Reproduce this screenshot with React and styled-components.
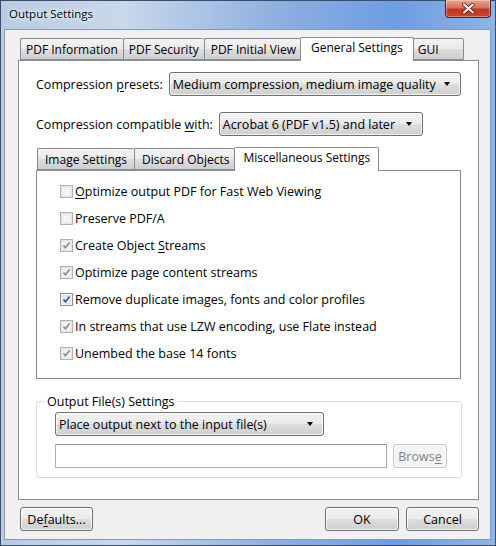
import React from "react";
import styled, { createGlobalStyle } from "styled-components";

const Global = createGlobalStyle`
  html, body { margin: 0; padding: 0; }
  body {
    font-family: "Open Sans", "Noto Sans", sans-serif;
    font-size: 12.5px;
    color: #000;
    background: #6f93c4;
  }
`;

const Window = styled.div`
  width: 496px;
  height: 546px;
  box-sizing: border-box;
  display: flex;
  flex-direction: column;
  background: linear-gradient(90deg, #b9cbe2 0%, #c9d8ea 25%, #8fb0e0 55%, #6d9de2 80%, #8fb4e6 100%);
  padding: 0 5px 6px 4px;
  box-shadow: inset 0 0 0 1px #3a4d6a;
`;

const TitleBar = styled.div`
  height: 29px;
  display: flex;
  align-items: flex-start;
  justify-content: space-between;
`;

const Title = styled.div`
  padding: 6px 0 0 5px;
  font-size: 11.5px;
  color: #000;
  text-shadow: 0 0 6px #fff, 0 0 4px #fff;
`;

const CloseButton = styled.div`
  width: 44px;
  height: 17px;
  border: 1px solid #5a1e1e;
  border-top: none;
  border-radius: 0 0 4px 4px;
  background: linear-gradient(180deg, #e8a493 0%, #d7715c 45%, #c1351e 55%, #c9452c 100%);
  display: flex;
  align-items: center;
  justify-content: center;
  box-shadow: inset 0 0 0 1px rgba(255, 255, 255, 0.35);
`;

const Client = styled.div`
  flex: 1;
  background: #f0f0f0;
  border: 1px solid #8a9bb3;
  display: flex;
  flex-direction: column;
  padding: 6px 11px 0 13px;
`;

const TabRow = styled.div`
  display: flex;
  align-items: flex-end;
  height: 24px;
  padding-left: ${(p) => p.$indent ?? 2}px;
  position: relative;
  z-index: 1;
  font-size: 12px;
`;

const Tab = styled.div`
  box-sizing: border-box;
  height: ${(p) => (p.$active ? 24 : 22)}px;
  padding: ${(p) => (p.$active ? `1px ${p.$pad ?? 10}px 0` : `2px ${p.$pad ?? 5}px 0`)};
  margin: ${(p) => (p.$active ? "0 -2px -1px" : "0")};
  border: 1px solid #898c95;
  border-right: ${(p) => (p.$active || p.$last ? "1px solid #898c95" : "none")};
  border-bottom: ${(p) => (p.$active ? "none" : "1px solid #898c95")};
  border-radius: 2px 2px 0 0;
  background: ${(p) =>
    p.$active ? "#fff" : "linear-gradient(180deg, #f2f2f2 0%, #ebebeb 50%, #dddddd 51%, #cfcfcf 100%)"};
  position: relative;
  z-index: ${(p) => (p.$active ? 2 : 1)};
  white-space: nowrap;
  line-height: 18px;
  ${(p) => (p.$width ? `width: ${p.$width}px;` : "")}
`;

const Panel = styled.div`
  background: #fff;
  border: 1px solid #898c95;
  box-sizing: border-box;
  height: ${(p) => p.$h}px;
  flex-shrink: 0;
  display: flex;
  flex-direction: column;
  padding: ${(p) => p.$pad};
`;

const FieldRow = styled.div`
  display: flex;
  align-items: center;
  gap: ${(p) => p.$gap}px;
  margin-bottom: ${(p) => p.$mb || 0}px;
  white-space: nowrap;
`;

const U = styled.span`
  text-decoration: underline;
  text-underline-offset: 2px;
`;

const Combo = styled.div`
  box-sizing: border-box;
  width: ${(p) => p.$w}px;
  height: 24px;
  flex-shrink: 0;
  border: 1px solid #707070;
  border-radius: 3px;
  background: linear-gradient(180deg, #f2f2f2 0%, #ebebeb 50%, #dddddd 51%, #cfcfcf 100%);
  display: flex;
  align-items: center;
  justify-content: space-between;
  padding: 0 10px 0 3px;
  white-space: nowrap;
  box-shadow: inset 0 0 0 1px rgba(255, 255, 255, 0.7);
`;

const Arrow = styled.span`
  width: 0;
  height: 0;
  border-left: 3.5px solid transparent;
  border-right: 3.5px solid transparent;
  border-top: 4px solid #000;
`;

const InnerWrap = styled.div`
  display: flex;
  flex-direction: column;
  margin-top: 10px;
`;

const CheckList = styled.div`
  display: flex;
  flex-direction: column;
  gap: 14px;
`;

const CheckRow = styled.div`
  display: flex;
  align-items: center;
  gap: 2px;
  height: 13px;
  line-height: 13px;
  white-space: nowrap;
`;

const Box = styled.span`
  box-sizing: border-box;
  width: 13px;
  height: 13px;
  border: 1px solid ${(p) => (p.$enabled ? "#8e8f8f" : "#b1b1b1")};
  background: ${(p) =>
    p.$enabled ? "linear-gradient(135deg, #dcdcdc, #fff)" : "#f4f4f4"};
  box-shadow: inset 0 0 0 1px ${(p) => (p.$enabled ? "#f4f4f4" : "#e6e6e6")},
    inset 0 0 0 2px ${(p) => (p.$enabled ? "#dfe6ee" : "#ececec")};
  display: flex;
  align-items: center;
  justify-content: center;
  flex-shrink: 0;
`;

const Group = styled.fieldset`
  margin: 14px 0 0;
  border: 1px solid #dcdcdc;
  border-radius: 3px;
  padding: 2px 14px 9px 18px;
  display: flex;
  flex-direction: column;
  gap: 8px;
`;

const Legend = styled.legend`
  padding: 0 3px;
  margin-left: -11px;
`;

const TextBox = styled.div`
  box-sizing: border-box;
  width: 332px;
  height: 24px;
  border: 1px solid #abadb3;
  border-top-color: #8f94a0;
  border-radius: 1px;
  background: #fff;
`;

const Button = styled.div`
  box-sizing: border-box;
  width: ${(p) => p.$w}px;
  height: 24px;
  margin-left: ${(p) => p.$ml || 0}px;
  border: 1px solid ${(p) => (p.$disabled ? "#c9c9c9" : "#707070")};
  border-radius: 3px;
  background: ${(p) =>
    p.$disabled ? "#f4f4f4" : "linear-gradient(180deg, #f2f2f2 0%, #ebebeb 50%, #dddddd 51%, #cfcfcf 100%)"};
  color: ${(p) => (p.$disabled ? "#838383" : "#000")};
  display: flex;
  align-items: center;
  justify-content: center;
  box-shadow: inset 0 0 0 1px rgba(255, 255, 255, 0.7);
  white-space: nowrap;
`;

const BottomBar = styled.div`
  display: flex;
  align-items: center;
  margin-top: 7px;
  padding-left: 2px;
`;

const Spacer = styled.div`
  flex: 1;
`;

const Check = ({ on, enabled, children }) => (
  <CheckRow>
    <Box $enabled={enabled}>
      {on && (
        <svg width="9" height="9" viewBox="0 0 9 9">
          <path
            d="M1.5 4.6 L3.5 6.8 L7.5 1.6"
            fill="none"
            stroke={enabled ? "#2a4bb0" : "#8a8a8a"}
            strokeWidth="1.6"
          />
        </svg>
      )}
    </Box>
    <span>{children}</span>
  </CheckRow>
);

export default function App() {
  return (
    <>
      <Global />
      <Window>
        <TitleBar>
          <Title>Output Settings</Title>
          <CloseButton>
            <svg width="13" height="11" viewBox="0 0 13 11">
              <path d="M2 1.5 L11 9.5 M11 1.5 L2 9.5" stroke="#5a1a10" strokeWidth="3.6" strokeLinecap="round" />
              <path d="M2 1.5 L11 9.5 M11 1.5 L2 9.5" stroke="#fff" strokeWidth="2" strokeLinecap="round" />
            </svg>
          </CloseButton>
        </TitleBar>
        <Client>
          <TabRow>
            <Tab>PDF Information</Tab>
            <Tab>PDF Security</Tab>
            <Tab $pad={6}>PDF Initial View</Tab>
            <Tab $active>General Settings</Tab>
            <Tab $last $width={52}>GUI</Tab>
          </TabRow>
          <Panel $h={440} $pad="11px 17px 0 17px">
            <FieldRow $gap={6} $mb={16}>
              <span>
                Compression <U>p</U>resets:
              </span>
              <Combo $w={292}>
                Medium compression, medium image quality <Arrow />
              </Combo>
            </FieldRow>
            <FieldRow $gap={6}>
              <span>
                Compression compatible <U>w</U>ith:
              </span>
              <Combo $w={204}>
                Acrobat 6 (PDF v1.5) and later <Arrow />
              </Combo>
            </FieldRow>
            <InnerWrap>
              <TabRow $indent={1}>
                <Tab $pad={7}>Image Settings</Tab>
                <Tab $pad={7}>Discard Objects</Tab>
                <Tab $pad={8} $active>
                  Miscellaneous Settings
                </Tab>
              </TabRow>
              <Panel $h={209} $pad="14px 23px 0 23px">
                <CheckList>
                  <Check>
                    <U>O</U>ptimize output PDF for Fast Web Viewing
                  </Check>
                  <Check>Preserve PDF/A</Check>
                  <Check on>
                    Create Object <U>S</U>treams
                  </Check>
                  <Check on>Optimize page content streams</Check>
                  <Check on enabled>
                    Remove duplicate images, fonts and color profiles
                  </Check>
                  <Check on>In streams that use LZW encoding, use Flate instead</Check>
                  <Check on>Unembed the base 14 fonts</Check>
                </CheckList>
              </Panel>
            </InnerWrap>
            <Group>
              <Legend>Output File(s) Settings</Legend>
              <Combo $w={269}>
                Place output next to the input file(s) <Arrow />
              </Combo>
              <FieldRow $gap={6}>
                <TextBox />
                <Button $w={54} $disabled>
                  <span>
                    Brows<U>e</U>
                  </span>
                </Button>
              </FieldRow>
            </Group>
          </Panel>
          <BottomBar>
            <Button $w={73}>
              <span>
                De<U>f</U>aults...
              </span>
            </Button>
            <Spacer />
            <Button $w={74}>OK</Button>
            <Button $w={73} $ml={7}>
              Cancel
            </Button>
          </BottomBar>
        </Client>
      </Window>
    </>
  );
}
